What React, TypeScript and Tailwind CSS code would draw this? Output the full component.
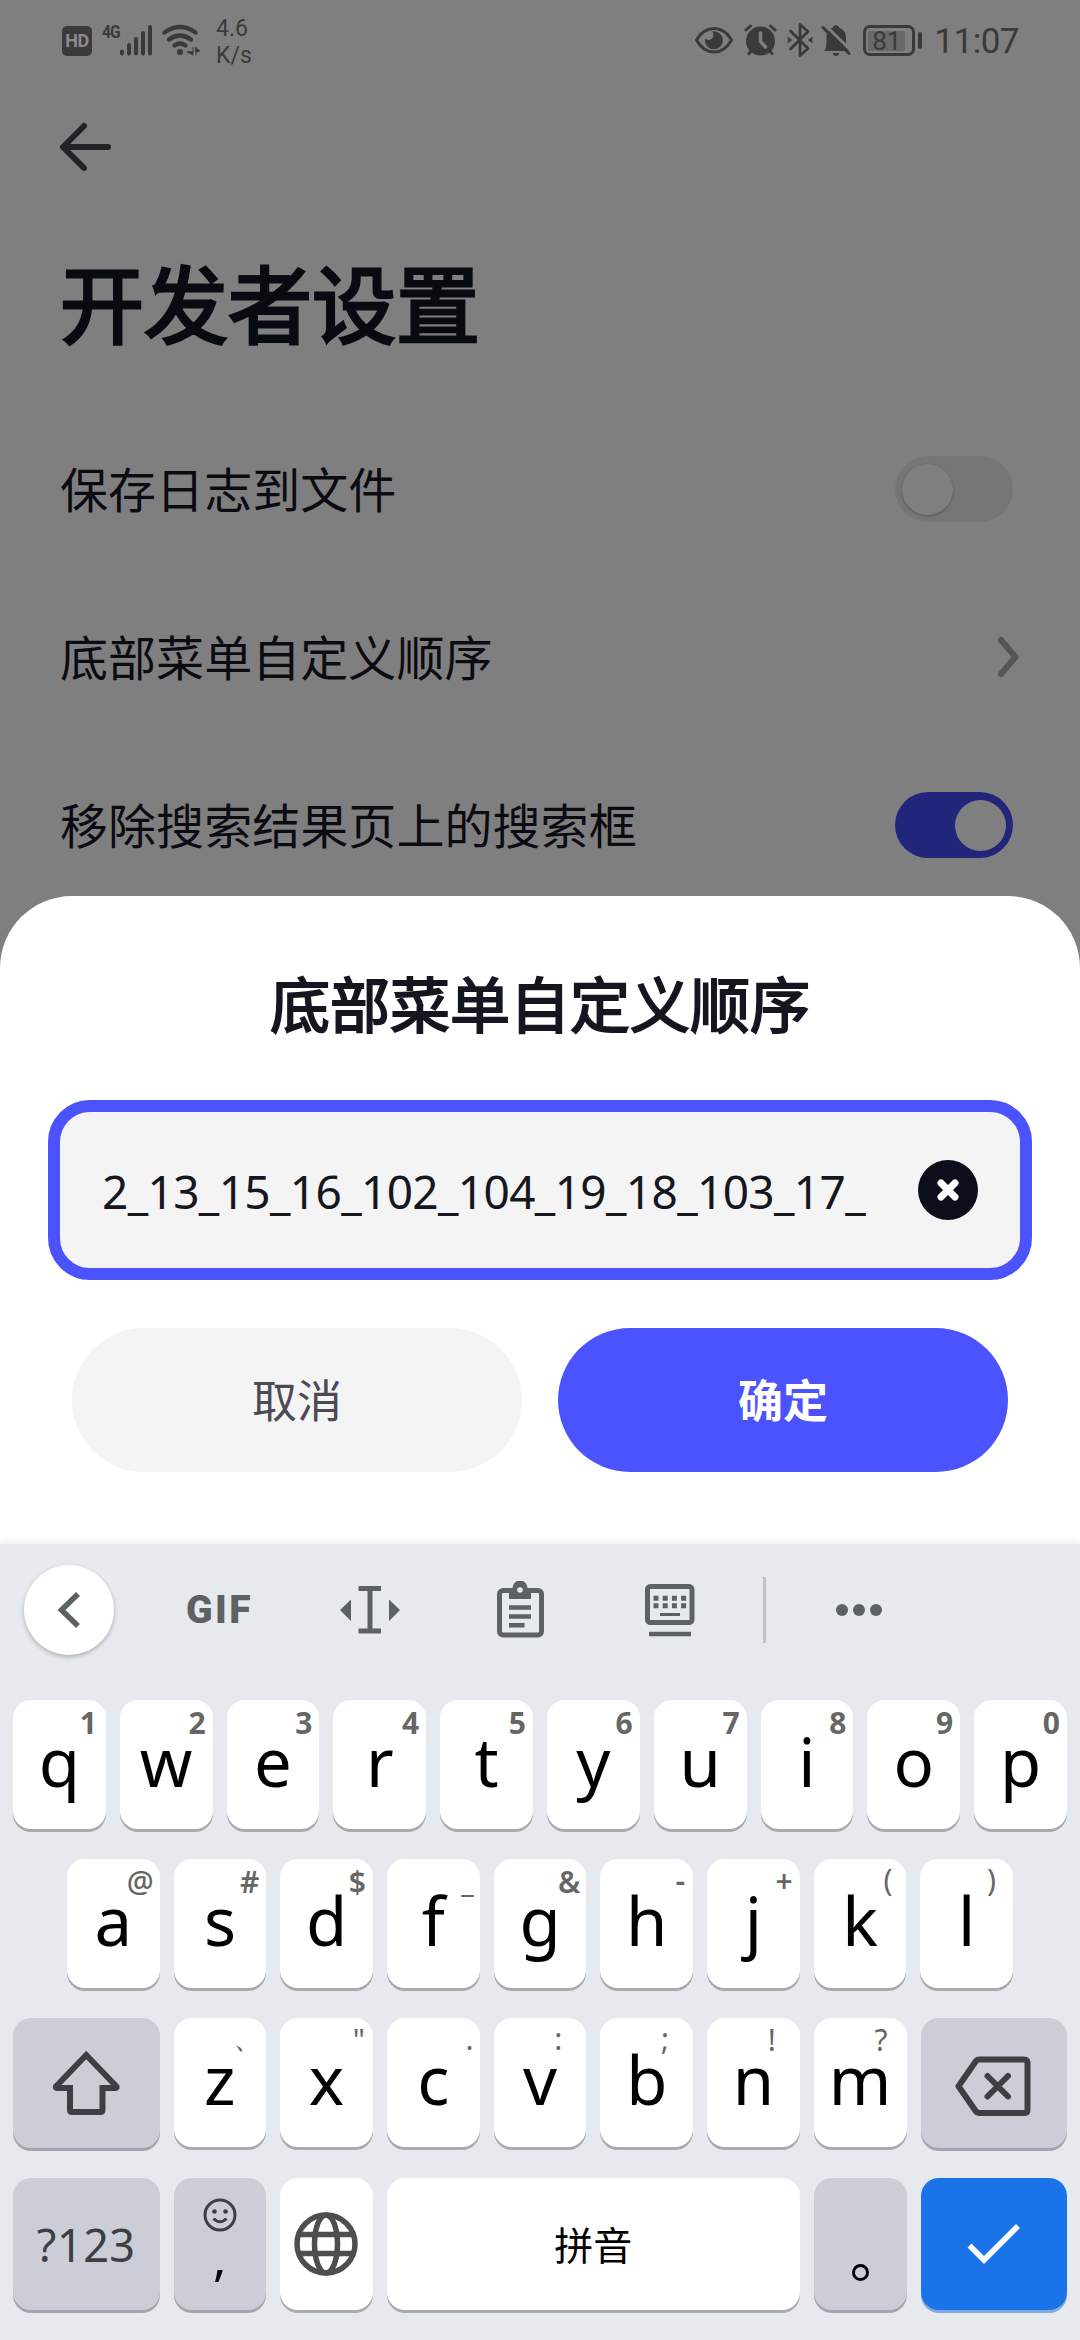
import React from "react";

const CJK = "font-['Noto_Sans_CJK_SC',sans-serif]";
const LATIN = "font-['Noto_Sans',sans-serif]";

function StatusBar() {
  return (
    <header className="flex h-[84px] items-start pl-[62px] pr-[62px] text-[#3a3a3a]">
      <div className="mt-[26px] flex h-[30px] w-[30px] items-center justify-center rounded-[5px] bg-[#3a3a3a] font-['Roboto',sans-serif] text-[18px] leading-none font-bold tracking-[-0.5px] text-[#8a8a8a]">
        HD
      </div>
      <span className="mt-[22px] ml-[10px] w-[18px] font-['Roboto',sans-serif] text-[19px] leading-[20px] font-bold tracking-[-1px] whitespace-nowrap">
        <span className="inline-block origin-left scale-x-[0.82]">4G</span>
      </span>
      <svg className="mt-[24px]" width="32" height="32" viewBox="120 24 32 32" stroke="currentColor" strokeWidth="4" strokeLinecap="round">
        <path d="M122 51.500V53.500M129 45V53.500M136 39V53.500M143 33V53.500M150 27V53.500" />
      </svg>
      <svg className="mt-[22px] ml-[9px]" width="40" height="36" viewBox="161 22 40 36" fill="none" stroke="currentColor" strokeWidth="4.200" strokeLinecap="round">
        <path d="M164.500 32.500Q180 21.500 195.500 32.500M169 39.500Q180 31.500 191 39.500M174.500 45.500Q180 41.500 185.500 45.500" />
        <circle cx="180" cy="52" r="3" fill="currentColor" stroke="none" />
        <path d="M193 47.500V55L187 51.800H193M196 47.500V55M195.500 47.500L200 51L195.500 52" fill="currentColor" stroke="currentColor" strokeWidth="1" />
      </svg>
      <div className="mt-[15px] ml-[15px] font-['Roboto',sans-serif] text-[23px] leading-[27px]">
        <div>4.6</div>
        <div>K/s</div>
      </div>

      <div className="ml-auto flex items-start">
        <svg className="mt-[26px]" width="38" height="28" viewBox="694 26 38 28" fill="none" stroke="currentColor" strokeWidth="3">
          <path d="M695.500 40Q702 28.500 713 28.500T730.500 40Q724 52 713 52T695.500 40Z" />
          <path d="M711 31.500A9 9 0 1 1 704 38.500A4.500 4.500 0 1 0 711 31.500Z" fill="currentColor" stroke="none" />
        </svg>
        <svg className="mt-[24px] ml-[11px]" width="33" height="32" viewBox="743 24 33 32" fill="none" stroke="currentColor" strokeWidth="3" strokeLinecap="round">
          <circle cx="759.500" cy="41" r="14.500" fill="currentColor" stroke="none" />
          <path d="M745 30L749.500 26M774 30L769.500 26M748 53.500L751 50M771 53.500L768 50" />
          <path d="M759.500 33V41.500L764.500 47" stroke="#7f7f7f" strokeWidth="3.500" />
        </svg>
        <svg className="mt-[22px] ml-[10px]" width="26" height="36" viewBox="786 22 26 36" fill="none" stroke="currentColor" strokeWidth="2.800" strokeLinejoin="round" strokeLinecap="round">
          <path d="M789.500 31L807 48.500L799 55.500V24.500L807 31.500L789.500 49" />
          <path d="M787.500 37.500L790.500 40L787.500 42.500ZM810.500 37.500L807.500 40L810.500 42.500Z" fill="currentColor" strokeWidth="1" />
        </svg>
        <svg className="mt-[24px] ml-[8px]" width="30" height="33" viewBox="820 24 30 33" fill="currentColor">
          <path d="M823 51C825.500 48 825.500 46 825.500 38C825.500 31 829 28.500 832 27.500C832.500 24.500 837.500 24.500 838 27.500C842 29 845 32 845 38C845 46 845.500 48 848 51Z" />
          <path d="M831.500 53H838.500Q837.500 56 835 56T831.500 53Z" />
          <path d="M824 25L850 50.500" stroke="#7f7f7f" strokeWidth="3" />
          <path d="M822 27.500L848 53.500" stroke="currentColor" strokeWidth="3" strokeLinecap="round" />
        </svg>
        <div className="mt-[25px] ml-[12px] flex h-[31px] w-[52px] items-center rounded-[7px] border-[3px] border-[#3a3a3a] pl-[2px]">
          <div className="flex h-[20px] w-[37px] items-center justify-center rounded-[2px] bg-[#686868] font-['Roboto',sans-serif] text-[26px] leading-none">
            81
          </div>
        </div>
        <div className="mt-[32px] ml-[3px] h-[17px] w-[4px] rounded-[2px] bg-[#3a3a3a]" />
        <div className="mt-[22px] mr-[-1px] ml-[12px] font-['Roboto',sans-serif] text-[35px] leading-[40px] tracking-[-0.5px]">11:07</div>
      </div>
    </header>
  );
}

function Toggle({ on }: { on?: boolean }) {
  return (
    <div className={on ? "flex h-[66px] w-[118px] items-center justify-end rounded-full bg-[#22267b] px-[7px]" : "flex h-[66px] w-[118px] items-center rounded-full bg-[#767676] px-[7px]"}>
      <div className={on ? "h-[51px] w-[51px] rounded-full bg-[#7f7f7f]" : "h-[51px] w-[51px] rounded-full bg-[#7f7f7f] shadow-[0_1px_3px_rgba(0,0,0,0.25)]"} />
    </div>
  );
}

function Row({ label, children }: { label: string; children: React.ReactNode }) {
  return (
    <div className="flex h-[168px] items-center justify-between pr-[67px] pl-[60px]">
      <span className={`${CJK} mt-[-5px] text-[48px] leading-[60px] tracking-[0.06px] text-[#0b0b11]`}>{label}</span>
      {children}
    </div>
  );
}

function Settings() {
  return (
    <main className="h-[896px] bg-[#7f7f7f]">
      <StatusBar />
      <svg className="mt-[36px] ml-[57px]" width="56" height="54" viewBox="57 120 56 54" fill="none" stroke="#222125" strokeWidth="6" strokeLinecap="round" strokeLinejoin="round">
        <path d="M108 147H63M84 126L63 147L84 168" />
      </svg>
      <h1 className={`${CJK} mt-[77px] ml-[60px] text-[84px] leading-[100px] text-[#090b12] [-webkit-text-stroke:3px_#090b12]`}>开发者设置</h1>
      <div className="mt-[54px]">
        <Row label="保存日志到文件"><Toggle /></Row>
        <Row label="底部菜单自定义顺序">
          <svg className="mr-[-10px]" width="28" height="46" viewBox="996 634 28 46" fill="none" stroke="#555" strokeWidth="6" strokeLinecap="round" strokeLinejoin="round">
            <path d="M1002 640L1016.500 657L1002 674" />
          </svg>
        </Row>
        <Row label="移除搜索结果页上的搜索框"><Toggle on /></Row>
      </div>
    </main>
  );
}

function Sheet() {
  return (
    <div className="bg-[#7f7f7f]">
      <section className="flex h-[648px] flex-col rounded-t-[72px] bg-white px-[48px]">
        <h2 className={`${CJK} mt-[66px] text-center text-[60px] leading-[80px] text-[#141720] [-webkit-text-stroke:2px_#141720]`}>底部菜单自定义顺序</h2>
        <div className="mt-[58px] flex h-[180px] items-center justify-between rounded-[42px] border-[12px] border-[#4b53fe] bg-[#f4f4f5] pr-[42px] pl-[42px]">
          <span className={`${LATIN} mt-[2px] text-[46px] leading-[60px] tracking-[-0.630px] text-[#15171d]`}>2_13_15_16_102_104_19_18_103_17_</span>
          <svg width="60" height="60" viewBox="0 0 60 60">
            <circle cx="30" cy="30" r="30" fill="#0c0e1c" />
            <path d="M23 23L37 37M37 23L23 37" stroke="#fff" strokeWidth="7" strokeLinecap="round" />
          </svg>
        </div>
        <div className={`${CJK} mt-[48px] flex gap-[36px] px-[24px] text-[45px]`}>
          <button className="h-[144px] flex-1 rounded-full bg-[#f4f4f5] pb-[3px] text-[#4b4a55]">取消</button>
          <button className="h-[144px] flex-1 rounded-full bg-[#4b53fe] pb-[3px] font-bold text-white">确定</button>
        </div>
      </section>
    </div>
  );
}

function Toolbar() {
  return (
    <div className="flex h-[132px] items-center pl-[24px] text-[#5c6163]">
      <div className="flex h-[90px] w-[90px] items-center justify-center rounded-full bg-white shadow-[0_2px_4px_rgba(0,0,0,0.25)]">
        <svg width="24" height="40" viewBox="56 1590 24 40" fill="none" stroke="currentColor" strokeWidth="5.500">
          <path d="M77 1594L60.500 1610L77 1626" />
        </svg>
      </div>
      <span className="ml-[72px] w-[70px] font-['Roboto',sans-serif] text-[39px] leading-none font-black tracking-[2.500px]">GIF</span>
      <svg className="ml-[82px]" width="64" height="50" viewBox="338 1585 64 50" fill="currentColor">
        <path d="M358.500 1586H381V1591H372.500V1628.500H381V1633.500H358.500V1628.500H367.500V1591H358.500ZM351 1599.500V1621L340 1610ZM389 1599.500V1621L400 1610Z" />
      </svg>
      <svg className="ml-[93px]" width="50" height="58" viewBox="495 1581 50 58" fill="none" stroke="currentColor" strokeWidth="5">
        <rect x="499.500" y="1590.500" width="42" height="44.500" rx="3.500" />
        <path d="M509 1588H512.500A7.500 7.500 0 0 1 527.500 1588H531V1599H509Z" fill="currentColor" stroke="none" />
        <circle cx="520" cy="1590" r="2.800" fill="#e6eaee" stroke="none" />
        <path d="M509 1607.500H531M509 1616.500H531M509 1625.200H524.500" strokeWidth="4.600" />
      </svg>
      <svg className="ml-[99px]" width="52" height="54" viewBox="644 1583 52 54" fill="none" stroke="currentColor" strokeWidth="5">
        <rect x="647.500" y="1586.500" width="44.500" height="36" rx="3" />
        <path d="M653.500 1598.200H688M653.500 1605.700H688" strokeDasharray="5 4.200" />
        <path d="M660 1614.500H680" strokeWidth="3" />
        <path d="M649 1634H691" strokeWidth="4.500" />
      </svg>
      <div className="ml-[67px] h-[66px] w-[3px] bg-[#bfc4c7]" />
      <div className="ml-[70px] flex gap-[5px]">
        <div className="h-[12px] w-[12px] rounded-full bg-[#5c6163]" />
        <div className="h-[12px] w-[12px] rounded-full bg-[#5c6163]" />
        <div className="h-[12px] w-[12px] rounded-full bg-[#5c6163]" />
      </div>
    </div>
  );
}

type KeyDef = { k: string; hint: string; pos: string };

const row1: KeyDef[] = [
  { k: "q", hint: "1", pos: "top-[3px] right-[9px] font-bold" },
  { k: "w", hint: "2", pos: "top-[3px] right-[7px] font-bold" },
  { k: "e", hint: "3", pos: "top-[3px] right-[7px] font-bold" },
  { k: "r", hint: "4", pos: "top-[3px] right-[7px] font-bold" },
  { k: "t", hint: "5", pos: "top-[3px] right-[7px] font-bold" },
  { k: "y", hint: "6", pos: "top-[3px] right-[7px] font-bold" },
  { k: "u", hint: "7", pos: "top-[3px] right-[7px] font-bold" },
  { k: "i", hint: "8", pos: "top-[3px] right-[7px] font-bold" },
  { k: "o", hint: "9", pos: "top-[3px] right-[7px] font-bold" },
  { k: "p", hint: "0", pos: "top-[3px] right-[7px] font-bold" },
];

const row2: KeyDef[] = [
  { k: "a", hint: "@", pos: "top-[3px] right-[6px] font-medium" },
  { k: "s", hint: "#", pos: "top-[3px] right-[7px] font-semibold" },
  { k: "d", hint: "$", pos: "top-[3px] right-[7px] font-semibold" },
  { k: "f", hint: "_", pos: "top-[2px] right-[6px] font-bold" },
  { k: "g", hint: "&", pos: "top-[3px] right-[6px] font-semibold" },
  { k: "h", hint: "-", pos: "top-[2px] right-[8px] font-semibold" },
  { k: "j", hint: "+", pos: "top-[2px] right-[7px] font-semibold" },
  { k: "k", hint: "(", pos: "top-[1px] right-[14px]" },
  { k: "l", hint: ")", pos: "top-[1px] right-[17px]" },
];

const row3: KeyDef[] = [
  { k: "z", hint: "、", pos: "top-[-1px] right-[3px]" },
  { k: "x", hint: "\"", pos: "top-[2px] right-[8px]" },
  { k: "c", hint: ".", pos: "top-[1px] right-[6px]" },
  { k: "v", hint: ":", pos: "top-[1px] right-[24px]" },
  { k: "b", hint: ";", pos: "top-[1px] right-[24px]" },
  { k: "n", hint: "!", pos: "top-[2px] right-[24px]" },
  { k: "m", hint: "?", pos: "top-[2px] right-[19px]" },
];

function LetterKey({ k, hint, pos }: KeyDef) {
  return (
    <div className="relative h-[129px] flex-1 rounded-[18px] bg-white text-center shadow-[0_3px_0_#a8abad]">
      <span className="text-[67px] leading-[123px] text-black">{k}</span>
      <span className={`absolute text-[30px] leading-[40px] text-[#666] ${pos}`}>{hint}</span>
    </div>
  );
}

const GREY_KEY = "flex items-center justify-center rounded-[18px] bg-[#cbced7] text-[#3c4043] shadow-[0_3px_0_#a3a6ae]";

function Keyboard() {
  return (
    <section className={`${LATIN} h-[796px] bg-[#e6eaee] shadow-[0_-2px_6px_rgba(120,150,180,0.15)]`}>
      <Toolbar />
      <div className="mt-[24px] flex gap-[14px] px-[13px]">
        {row1.map((d) => <LetterKey key={d.k} {...d} />)}
      </div>
      <div className="mt-[30px] flex gap-[14px] px-[67px]">
        {row2.map((d) => <LetterKey key={d.k} {...d} />)}
      </div>
      <div className="mt-[30px] flex gap-[14px] px-[13px]">
        <div className={`${GREY_KEY} h-[130px] w-[146.500px]`}>
          <svg width="70" height="68" viewBox="51 2048 70 68" fill="none" stroke="currentColor" strokeWidth="6" strokeLinejoin="round">
            <path d="M86.200 2054L56 2085.500Q55.500 2087 57 2087H70V2109Q70 2111 72 2111H100.500Q102.500 2111 102.500 2109V2087H115.500Q117 2087 116.500 2085.500Z" strokeLinejoin="miter" />
          </svg>
        </div>
        {row3.map((d) => <LetterKey key={d.k} {...d} />)}
        <div className={`${GREY_KEY} h-[130px] w-[146.500px]`}>
          <svg className="mt-[6px] mr-[2px]" width="80" height="64" viewBox="952 2054 80 64" fill="none" stroke="currentColor" strokeWidth="6" strokeLinejoin="round">
            <path d="M978 2059.500H1023Q1026.500 2059.500 1026.500 2063V2110Q1026.500 2113 1023 2113H978Q976 2113 975 2111.500L957.500 2086.300L975 2061Q976 2059.500 978 2059.500Z" />
            <path d="M986.500 2076L1007 2096.500M1007 2076L986.500 2096.500" strokeLinecap="round" />
          </svg>
        </div>
      </div>
      <div className="mt-[30px] flex h-[132px] gap-[14px] px-[13px]">
        <div className={`${GREY_KEY} w-[146.500px] pt-[1px] text-[45px] tracking-[0.5px]`}>?123</div>
        <div className={`${GREY_KEY} w-[92.500px] flex-col`}>
          <svg className="mt-[4px]" width="34" height="34" viewBox="0 0 34 34" fill="none" stroke="currentColor" strokeWidth="3">
            <circle cx="17" cy="17" r="15" />
            <circle cx="11.500" cy="13.500" r="2.300" fill="currentColor" stroke="none" />
            <circle cx="22.500" cy="13.500" r="2.300" fill="currentColor" stroke="none" />
            <path d="M10.500 20.500Q17 27 23.500 20.500" />
          </svg>
          <span className="mt-[-6px] mb-[6px] text-[50px] leading-[62px] text-black">,</span>
        </div>
        <div className="flex w-[92.500px] items-center justify-center rounded-[18px] bg-white shadow-[0_3px_0_#a8abad]">
          <svg width="64" height="64" viewBox="0 0 64 64" fill="none" stroke="#4e4e4e" strokeWidth="5.500">
            <circle cx="32" cy="32" r="29" />
            <ellipse cx="32" cy="32" rx="11.500" ry="29" />
            <path d="M4 22.500H60M4 41.500H60" />
          </svg>
        </div>
        <div className={`${CJK} flex flex-1 items-center justify-center rounded-[18px] bg-white pb-[2px] text-[39px] leading-none text-black shadow-[0_3px_0_#a8abad]`}>拼音</div>
        <div className={`${GREY_KEY} w-[92.500px]`}>
          <div className="mt-[56px] h-[17px] w-[17px] rounded-full border-[3px] border-black" />
        </div>
        <div className="flex w-[146.500px] items-center justify-center rounded-[18px] bg-[#1b73e9] shadow-[0_3px_0_#84a9db]">
          <svg width="56" height="44" viewBox="966 2223 56 44" fill="none" stroke="#fff" strokeWidth="5.500">
            <path d="M969.500 2246.500L984 2261L1018 2227" />
          </svg>
        </div>
      </div>
    </section>
  );
}

export default function App() {
  return (
    <div className="h-[2340px] w-[1080px] overflow-hidden bg-white">
      <Settings />
      <Sheet />
      <Keyboard />
    </div>
  );
}
